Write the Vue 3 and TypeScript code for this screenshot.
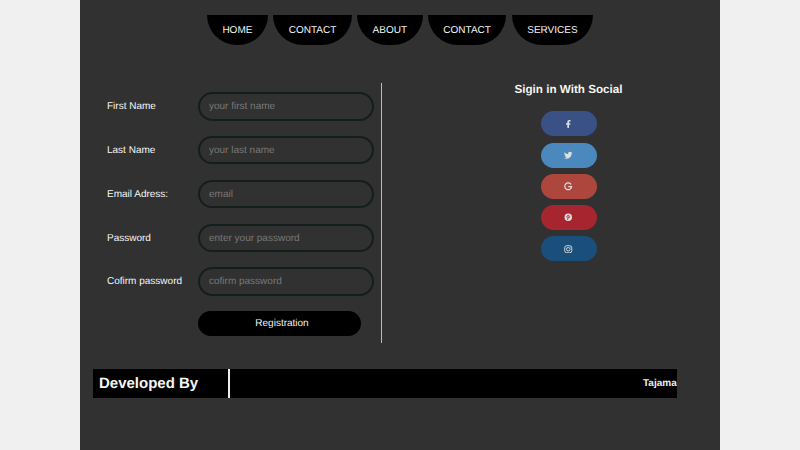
<script setup lang="ts">
const navItems: string[] = ['HOME', 'CONTACT', 'ABOUT', 'CONTACT', 'SERVICES']
const fields = [
  { label: 'First Name', placeholder: 'your first name', type: 'text' },
  { label: 'Last Name', placeholder: 'your last name', type: 'text' },
  { label: 'Email Adress:', placeholder: 'email', type: 'email' },
  { label: 'Password', placeholder: 'enter your password', type: 'password' },
  { label: 'Cofirm password', placeholder: 'cofirm password', type: 'password' },
]
</script>

<template>
  <div class="page">
    <nav class="nav">
      <a v-for="(item, i) in navItems" :key="i" class="nav-item">{{ item }}</a>
    </nav>

    <main class="content">
      <form class="form" @submit.prevent>
        <div v-for="f in fields" :key="f.label" class="row">
          <label class="label">{{ f.label }}</label>
          <input class="input" :type="f.type" :placeholder="f.placeholder" />
        </div>
        <button class="submit" type="submit">Registration</button>
      </form>

      <aside class="social">
        <h2 class="social-title">Sigin in With Social</h2>
        <div class="social-list">
          <a class="soc fb">
            <svg viewBox="0 0 320 512" class="ic"><path fill="currentColor" d="M279 288l14-93h-89v-60c0-25 12-50 52-50h41V6S260 0 225 0c-73 0-121 44-121 125v70H23v93h81v224h100V288z"/></svg>
          </a>
          <a class="soc tw">
            <svg viewBox="0 0 512 512" class="ic"><path fill="currentColor" d="M459 152c0 5 0 9 0 14 0 139-106 299-299 299-59 0-115-17-161-47 8 1 16 1 25 1 49 0 94-17 130-45-46-1-85-31-98-73 6 1 13 2 20 2 9 0 19-1 28-4-48-10-84-52-84-103v-1c14 8 30 13 47 13-28-19-47-51-47-87 0-20 5-37 14-53 52 64 129 105 216 110-2-8-3-16-3-24 0-58 47-105 105-105 30 0 58 13 77 33 24-5 47-14 67-26-8 25-25 45-46 58 21-2 41-8 60-16-14 21-32 39-51 54z"/></svg>
          </a>
          <a class="soc gg">
            <svg viewBox="0 0 24 24" class="ic"><path fill="none" stroke="currentColor" stroke-width="3.4" d="M20 7a9.6 9.6 0 1 0 1.4 6.2H12"/></svg>
          </a>
          <a class="soc pin">
            <svg viewBox="0 0 24 24" class="ic"><circle cx="12" cy="12" r="10.5" fill="currentColor"/><path fill="none" stroke="#a6252f" stroke-width="2.6" d="M8.5 12.5c-1.5-3.5 1-6 3.8-6 2.7 0 4.200 2.200 3.500 4.800-.7 2.300-3.200 3-4.300 1.300M12 10l-2 9"/></svg>
          </a>
          <a class="soc ig">
            <svg viewBox="0 0 24 24" class="ic"><rect x="2" y="2" width="20" height="20" rx="6" fill="none" stroke="currentColor" stroke-width="2.6"/><circle cx="12" cy="12" r="5" fill="none" stroke="currentColor" stroke-width="2.6"/><circle cx="18" cy="6" r="1.4" fill="currentColor"/></svg>
          </a>
        </div>
      </aside>
    </main>

    <footer class="dev">
      <div class="dev-title">Developed By</div>
      <div class="dev-track"><span class="dev-name">Tajama</span></div>
    </footer>
  </div>
</template>

<style>
html, body { margin: 0; background: #f0f0f0; }
</style>

<style scoped>
.page {
  width: 640px;
  height: 450px;
  margin: 0 auto;
  background: #313131;
  overflow: hidden;
  font-family: "Liberation Sans", Arial, sans-serif;
  font-size: 10px;
  color: #fff;
  text-rendering: geometricPrecision;
}
.nav {
  display: flex;
  justify-content: center;
  gap: 5.3px;
  padding-top: 15px;
}
.nav-item {
  height: 30px;
  line-height: 31px;
  padding: 0 15.5px;
  background: #000;
  border-radius: 0 0 30px 30px;
  color: #f5f5f5;
  font-size: 10px;
}
.content {
  display: flex;
  margin-top: 38.3px;
  height: 260px;
}
.form {
  width: 302px;
  padding-left: 27px;
  padding-top: 9px;
  box-sizing: border-box;
  border-right: 1px solid #bbb;
  flex: none;
}
.row {
  display: flex;
  align-items: center;
  height: 28.4px;
  margin-bottom: 15.35px;
}
.label {
  width: 91px;
  flex: none;
  padding-top: 1px;
  font-size: 10px;
  color: #f5f5f5;
}
.input {
  width: 176px;
  height: 28.4px;
  box-sizing: border-box;
  flex: none;
  padding: 1px 10px 0 9px;
  background: #313131;
  border: 2px solid #141e1c;
  border-radius: 15px;
  color: #fff;
  font: 10px "Liberation Sans", Arial, sans-serif;
  text-rendering: geometricPrecision;
  outline: none;
}
.input::placeholder { color: #787878; opacity: 1; }
.submit {
  display: block;
  width: 163px;
  height: 25px;
  margin: 0 0 0 91px;
  padding: 0 0 0 5px;
  background: #000;
  border: 0;
  border-radius: 13px;
  color: #f0f0f0;
  font: 10px "Liberation Sans", Arial, sans-serif;
  text-rendering: geometricPrecision;
}
.social {
  width: 255px;
  margin-left: 59px;
  text-align: center;
}
.social-title {
  margin: 0;
  font-size: 11.67px;
  line-height: 14px;
  color: #f5f5f5;
}
.social-list {
  display: flex;
  flex-direction: column;
  align-items: center;
  gap: 6.25px;
  margin-top: 14px;
}
.soc {
  width: 56px;
  height: 25px;
  border-radius: 13px;
  display: flex;
  align-items: center;
  justify-content: center;
  color: #dedede;
}
.ic { width: 8.5px; height: 8.5px; }
.fb { background: #3a5185; }
.tw { background: #4a88bd; }
.gg { background: #ad463c; }
.pin { background: #a6252f; }
.ig { background: #1b4f7b; }
.dev {
  display: flex;
  align-items: stretch;
  width: 584.5px;
  height: 29px;
  margin: 25.7px 0 0 12.5px;
  background: #000;
}
.dev-title {
  width: 137px;
  flex: none;
  box-sizing: border-box;
  padding-left: 6.5px;
  font-size: 15px;
  font-weight: bold;
  line-height: 29px;
  border-right: 2px solid #eee;
  color: #f5f5f5;
}
.dev-track {
  flex: 1;
  overflow: hidden;
  position: relative;
  white-space: nowrap;
  line-height: 29px;
}
.dev-name {
  position: absolute;
  left: 413.5px;
  font-size: 10px;
  font-weight: bold;
  color: #eee;
}
</style>
